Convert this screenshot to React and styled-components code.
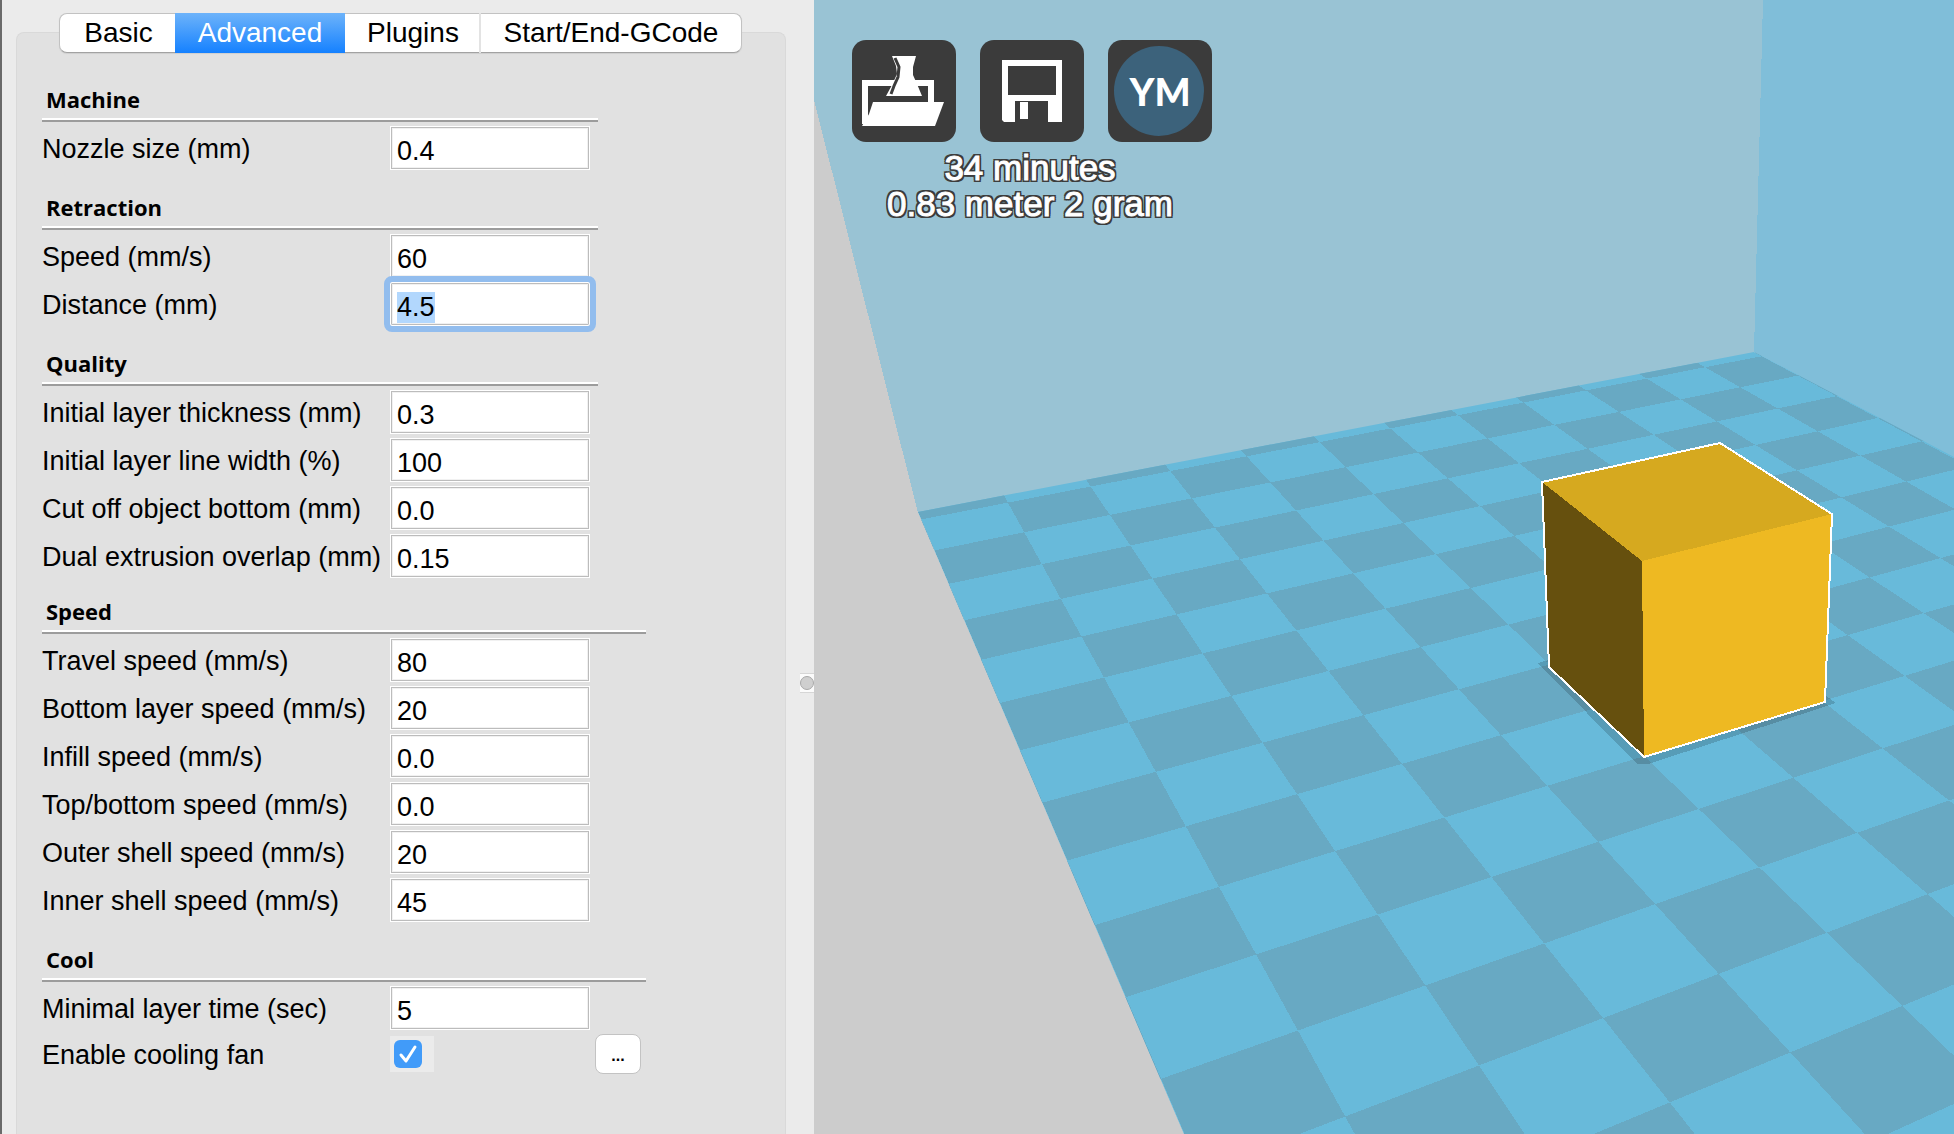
import React, { useEffect, useRef } from "react";
import styled, { createGlobalStyle, css } from "styled-components";

const GlobalStyle = createGlobalStyle`
  * { box-sizing: border-box; }
  html, body, #root { height: 100%; margin: 0; }
  body {
    background: #ebebeb;
    color: #000;
    font-family: "Liberation Sans", Arial, sans-serif;
    font-size: 27px;
    overflow: hidden;
  }
  ::selection { background: #b2d7fd; color: #000; }
`;

const Window = styled.main`
  display: flex;
  min-height: 100vh;
  border-left: 2px solid #6a6a6a;
`;

const Sidebar = styled.section`
  flex: 0 0 798px;
  display: flex;
  flex-direction: column;
  padding: 13px 14px 0;
  background: #ebebeb;
`;

const Tabs = styled.div`
  display: flex;
  align-self: flex-start;
  height: 40px;
  margin: 0 0 -21px 43px;
  border: 1px solid #c2c2c2;
  border-bottom-color: #a2a2a2;
  border-radius: 8px;
  background: #fff;
  box-shadow: 0 1px 1px #cfcfcf;
  z-index: 1;
`;

const Tab = styled.button`
  width: ${(p) => p.$width}px;
  margin: -1px 0;
  padding: 0;
  border: 0;
  border-left: 2px solid ${(p) => (p.$divided ? "#e3e3e3" : "transparent")};
  background: transparent;
  color: #000;
  font: inherit;
  font-size: 28px;
  line-height: 32px;
  white-space: nowrap;
  ${(p) =>
    p.$active &&
    css`
      border-left: 0;
      background: linear-gradient(#6db3fa, #1581ff);
      color: #fff;
    `}
`;

const Panel = styled.div`
  flex: 1;
  padding: 53px 25px 0;
  border: 1px solid #d9d9d9;
  border-bottom: 0;
  border-radius: 8px 8px 0 0;
  background: #e1e1e1;
`;

const Group = styled.div`
  display: flex;
  flex-direction: column;
  gap: 24px;
  width: ${(p) => (p.$wide ? 604 : 556)}px;
  margin-top: ${(p) => (p.$wide ? 20 : 0)}px;
`;

const Section = styled.fieldset`
  display: flex;
  flex-direction: column;
  gap: 4px;
  min-width: 0;
  margin: 0;
  padding: 0;
  border: 0;
`;

const Heading = styled.h2`
  height: 36px;
  margin: 0;
  padding-left: 4px;
  border-bottom: 2px solid #9c9c9c;
  box-shadow: inset 0 -2px #fff;
  font: 700 22px/26px "Open Sans", "Noto Sans", sans-serif;
`;

const Row = styled.div`
  display: grid;
  grid-template-columns: 348px 200px auto;
  align-items: center;
  height: ${(p) => (p.$compact ? 40 : 44)}px;
`;

const Label = styled.label`
  padding-top: 2px;
  line-height: 32px;
  white-space: nowrap;
`;

const Field = styled.input`
  width: 100%;
  height: 44px;
  padding: 6px 6px 0;
  border: 1px solid #fff;
  border-radius: 0;
  background: #fff;
  box-shadow: inset 0 0 0 1px #bcbcbc, inset 0 0 0 2px #f1f1f1;
  color: #000;
  font: inherit;
  line-height: 34px;
  outline: 0;
  &:focus {
    outline: 6px solid #92bdee;
    border-radius: 2px;
    z-index: 1;
  }
`;

const CheckArea = styled.span`
  display: flex;
  align-items: center;
  width: 44px;
  height: 36px;
  padding-left: 4px;
  background: #ebebeb;
`;

const Checkbox = styled.input`
  appearance: none;
  width: 28px;
  height: 28px;
  margin: 0;
  border-radius: 6px;
  background: #419bf9 url("data:image/svg+xml,%3Csvg xmlns='http://www.w3.org/2000/svg' viewBox='0 0 28 28'%3E%3Cpath d='M7 15l5 6 9-14' fill='none' stroke='%23fff' stroke-width='3' stroke-linecap='round' stroke-linejoin='round'/%3E%3C/svg%3E");
`;

const MoreButton = styled.button`
  width: 46px;
  height: 40px;
  margin: 0 0 0 5px;
  padding: 4px 0 0;
  border: 1px solid #c3c3c3;
  border-radius: 8px;
  background: #fff;
  color: #000;
  font: 700 16px/34px "Liberation Sans", Arial, sans-serif;
`;

const Splitter = styled.div`
  flex: 0 0 14px;
  display: flex;
  align-items: center;
  padding-top: 232px;
  background: #ebebeb;
`;

const Grip = styled.span`
  display: grid;
  place-items: center;
  width: 14px;
  height: 20px;
  border: solid #d6d6d6;
  border-width: 1px 0;
  background: #fbfbfb;
  &::before {
    content: "";
    width: 12px;
    height: 12px;
    border: 1px solid #a8a8a8;
    border-radius: 50%;
    background: #cfcfcf;
  }
`;

const Viewport = styled.section`
  position: relative;
  flex: 1;
  min-width: 0;
  overflow: hidden;
  background: #cccccc;
`;

const Scene = styled.svg`
  position: absolute;
  inset: 0;
  width: 100%;
  height: 100%;
`;

const Overlay = styled.div`
  position: relative;
  width: 360px;
  margin: 40px 0 0 38px;
`;

const Toolbar = styled.div`
  display: flex;
  gap: 24px;
`;

const ToolButton = styled.button`
  width: 104px;
  height: 102px;
  padding: 0;
  border: 0;
  border-radius: 14px;
  background: #3b3b3b;
  svg { display: block; }
`;

const LogoText = styled.text`
  fill: #fff;
  font: 900 38px Lato, sans-serif;
  text-anchor: middle;
`;

const Estimate = styled.p`
  margin: 8px 4px 0 0;
  color: #fff;
  font-size: 35px;
  line-height: 36px;
  text-align: center;
  white-space: nowrap;
  -webkit-text-stroke: 1px #fff;
  text-shadow: 2px 0 #3c3c3c, -2px 0 #3c3c3c, 0 2px #3c3c3c, 0 -2px #3c3c3c,
    2px 2px #3c3c3c, -2px 2px #3c3c3c, 2px -2px #3c3c3c, -2px -2px #3c3c3c;
`;

/* Grid crossings (column, row) and where the camera puts them. */
const ANCHORS = [
  [1, 0, 1008, 503],
  [5, 0, 1321, 442],
  [9, 0, 1585, 390],
  [11, 0, 1706, 367],
  [11, 5, 1906, 482],
  [10, 7, 1940, 558],
  [1, 4, 1081, 636],
  [4, 4, 1353, 574],
  [0, 6, 1020, 750],
  [3, 7, 1363, 716],
  [7, 10, 1883, 748],
  [3, 9, 1445, 818],
  [0, 11, 1161, 1078],
  [1, 12, 1345, 1116],
  [3, 12, 1604, 1018],
  [6, 12, 1928, 894],
  [4, 13, 1790, 1053],
];

/* Least-squares camera projection of the floor plane. */
function makeProjection(anchors) {
  const m = Array.from({ length: 8 }, () => new Array(9).fill(0));
  const add = (row) => {
    for (let r = 0; r < 8; r++) for (let c = 0; c < 9; c++) m[r][c] += row[r] * row[c];
  };
  anchors.forEach(([i, j, px, py]) => {
    const u = i / 10;
    const v = j / 10;
    const x = px / 1000;
    const y = py / 1000;
    add([u, v, 1, 0, 0, 0, -u * x, -v * x, x]);
    add([0, 0, 0, u, v, 1, -u * y, -v * y, y]);
  });
  for (let c = 0; c < 8; c++) {
    let best = c;
    for (let r = c + 1; r < 8; r++) if (Math.abs(m[r][c]) > Math.abs(m[best][c])) best = r;
    [m[c], m[best]] = [m[best], m[c]];
    for (let r = 0; r < 8; r++) {
      if (r === c) continue;
      const f = m[r][c] / m[c][c];
      for (let k = c; k < 9; k++) m[r][k] -= f * m[c][k];
    }
  }
  const h = m.map((row, r) => row[8] / row[r]);
  return (i, j) => {
    const u = i / 10;
    const v = j / 10;
    const w = h[6] * u + h[7] * v + 1;
    return [
      ((h[0] * u + h[1] * v + h[2]) / w) * 1000,
      ((h[3] * u + h[4] * v + h[5]) / w) * 1000,
    ];
  };
}

const project = makeProjection(ANCHORS);

function darkTiles() {
  let d = "";
  for (let i = -1; i < 13; i++) {
    for (let j = -1; j < 15; j++) {
      if ((i + j) % 2 === 0) continue;
      const pts = [project(i, j), project(i + 1, j), project(i + 1, j + 1), project(i, j + 1)];
      d += "M" + pts.map((p) => p.map((n) => n.toFixed(1)).join(" ")).join("L") + "Z";
    }
  }
  return d;
}

const TILES = darkTiles();

function BuildPlate() {
  return (
    <Scene viewBox="814 0 1140 1134" preserveAspectRatio="xMinYMin slice" shapeRendering="crispEdges" aria-label="Build plate with cube" role="img">
      <defs>
        <clipPath id="floor">
          <path d="M918 512L1754 352L2154 562V1334H1257L1184 1134Z" />
        </clipPath>
      </defs>
      <path d="M814 0H1763L1754 353L918 513L814 100Z" fill="#99c3d4" />
      <path d="M1763 0H2200V600L1754 352Z" fill="#80bed9" />
      <g clipPath="url(#floor)">
        <path d="M814 300H2200V1400H814Z" fill="#68bada" />
        <path d={TILES} fill="#68a9c3" />
      </g>
      <path d="M1538 663L1637 764H1648L1836 703L1826 696L1644 740L1549 660Z" fill="#000" fillOpacity="0.16" />
      <path d="M1542 482L1720 443L1832 514L1642 562Z" fill="#d6a91f" />
      <path d="M1542 482L1642 561L1644 757L1549 667Z" fill="#66500e" />
      <path d="M1642 561L1832 514L1825 702L1644 757Z" fill="#eeb922" />
      <path d="M1542 482L1720 443L1832 514L1825 702L1644 757L1549 667Z" fill="none" stroke="#fff" strokeWidth="2" />
    </Scene>
  );
}

function OpenIcon() {
  return (
    <svg width="104" height="102" viewBox="0 0 104 102" aria-hidden="true">
      <path d="M13 84V43H79V62" fill="none" stroke="#fff" strokeWidth="6" />
      <path d="M21 62H92L83 86H10L17 74Z" fill="#fff" />
      <path d="M40 16H64L61 27V35L65 44L70 56H34L40 45L45 34L44 26Z" fill="#fff" />
      <path d="M43 18L47 27L46 37L42 46L39 54" fill="none" stroke="#3b3b3b" strokeWidth="3" />
    </svg>
  );
}

function SaveIcon() {
  return (
    <svg width="104" height="102" viewBox="0 0 104 102" aria-hidden="true">
      <path fillRule="evenodd" d="M22 20H82V82H68V61H35V82H24L22 80ZM28 26V55H76V26Z" fill="#fff" />
      <path d="M40 62H48V79H40Z" fill="#fff" />
    </svg>
  );
}

function YouMagineIcon() {
  return (
    <svg width="104" height="102" viewBox="0 0 104 102" aria-hidden="true">
      <circle cx="51" cy="51" r="45" fill="#3c627b" />
      <LogoText x="52" y="66">YM</LogoText>
    </svg>
  );
}

const TOP_SECTIONS = [
  { title: "Machine", rows: [["Nozzle size (mm)", "0.4"]] },
  { title: "Retraction", rows: [["Speed (mm/s)", "60"], ["Distance (mm)", "4.5", true]] },
  {
    title: "Quality",
    rows: [
      ["Initial layer thickness (mm)", "0.3"],
      ["Initial layer line width (%)", "100"],
      ["Cut off object bottom (mm)", "0.0"],
      ["Dual extrusion overlap (mm)", "0.15"],
    ],
  },
];

const SPEED_ROWS = [
  ["Travel speed (mm/s)", "80"],
  ["Bottom layer speed (mm/s)", "20"],
  ["Infill speed (mm/s)", "0.0"],
  ["Top/bottom speed (mm/s)", "0.0"],
  ["Outer shell speed (mm/s)", "20"],
  ["Inner shell speed (mm/s)", "45"],
];

function Setting({ label, value, selected }) {
  const ref = useRef(null);
  const id = label.toLowerCase().replace(/[^a-z]+/g, "-");
  useEffect(() => {
    if (selected) {
      ref.current.focus();
      ref.current.select();
    }
  }, [selected]);
  return (
    <Row>
      <Label htmlFor={id}>{label}</Label>
      <Field id={id} ref={ref} type="text" defaultValue={value} />
    </Row>
  );
}

function SettingsSection({ title, rows, children }) {
  return (
    <Section aria-label={title}>
      <Heading>{title}</Heading>
      {rows.map(([label, value, selected]) => (
        <Setting key={label} label={label} value={value} selected={selected} />
      ))}
      {children}
    </Section>
  );
}

export default function App() {
  return (
    <>
      <GlobalStyle />
      <Window>
        <Sidebar>
          <Tabs role="tablist">
            <Tab role="tab" $width={115}>Basic</Tab>
            <Tab role="tab" $width={170} $active aria-selected="true">Advanced</Tab>
            <Tab role="tab" $width={134}>Plugins</Tab>
            <Tab role="tab" $width={262} $divided>Start/End-GCode</Tab>
          </Tabs>
          <Panel role="tabpanel">
            <Group>
              {TOP_SECTIONS.map((s) => (
                <SettingsSection key={s.title} {...s} />
              ))}
            </Group>
            <Group $wide>
              <SettingsSection title="Speed" rows={SPEED_ROWS} />
              <SettingsSection title="Cool" rows={[["Minimal layer time (sec)", "5"]]}>
                <Row $compact>
                  <Label htmlFor="cooling-fan">Enable cooling fan</Label>
                  <CheckArea>
                    <Checkbox id="cooling-fan" type="checkbox" defaultChecked />
                  </CheckArea>
                  <MoreButton aria-label="Cooling fan settings">...</MoreButton>
                </Row>
              </SettingsSection>
            </Group>
          </Panel>
        </Sidebar>
        <Splitter>
          <Grip />
        </Splitter>
        <Viewport>
          <BuildPlate />
          <Overlay>
            <Toolbar>
              <ToolButton aria-label="Load model"><OpenIcon /></ToolButton>
              <ToolButton aria-label="Save toolpath"><SaveIcon /></ToolButton>
              <ToolButton aria-label="Share on YouMagine"><YouMagineIcon /></ToolButton>
            </Toolbar>
            <Estimate>
              34 minutes
              <br />
              0.83 meter 2 gram
            </Estimate>
          </Overlay>
        </Viewport>
      </Window>
    </>
  );
}
